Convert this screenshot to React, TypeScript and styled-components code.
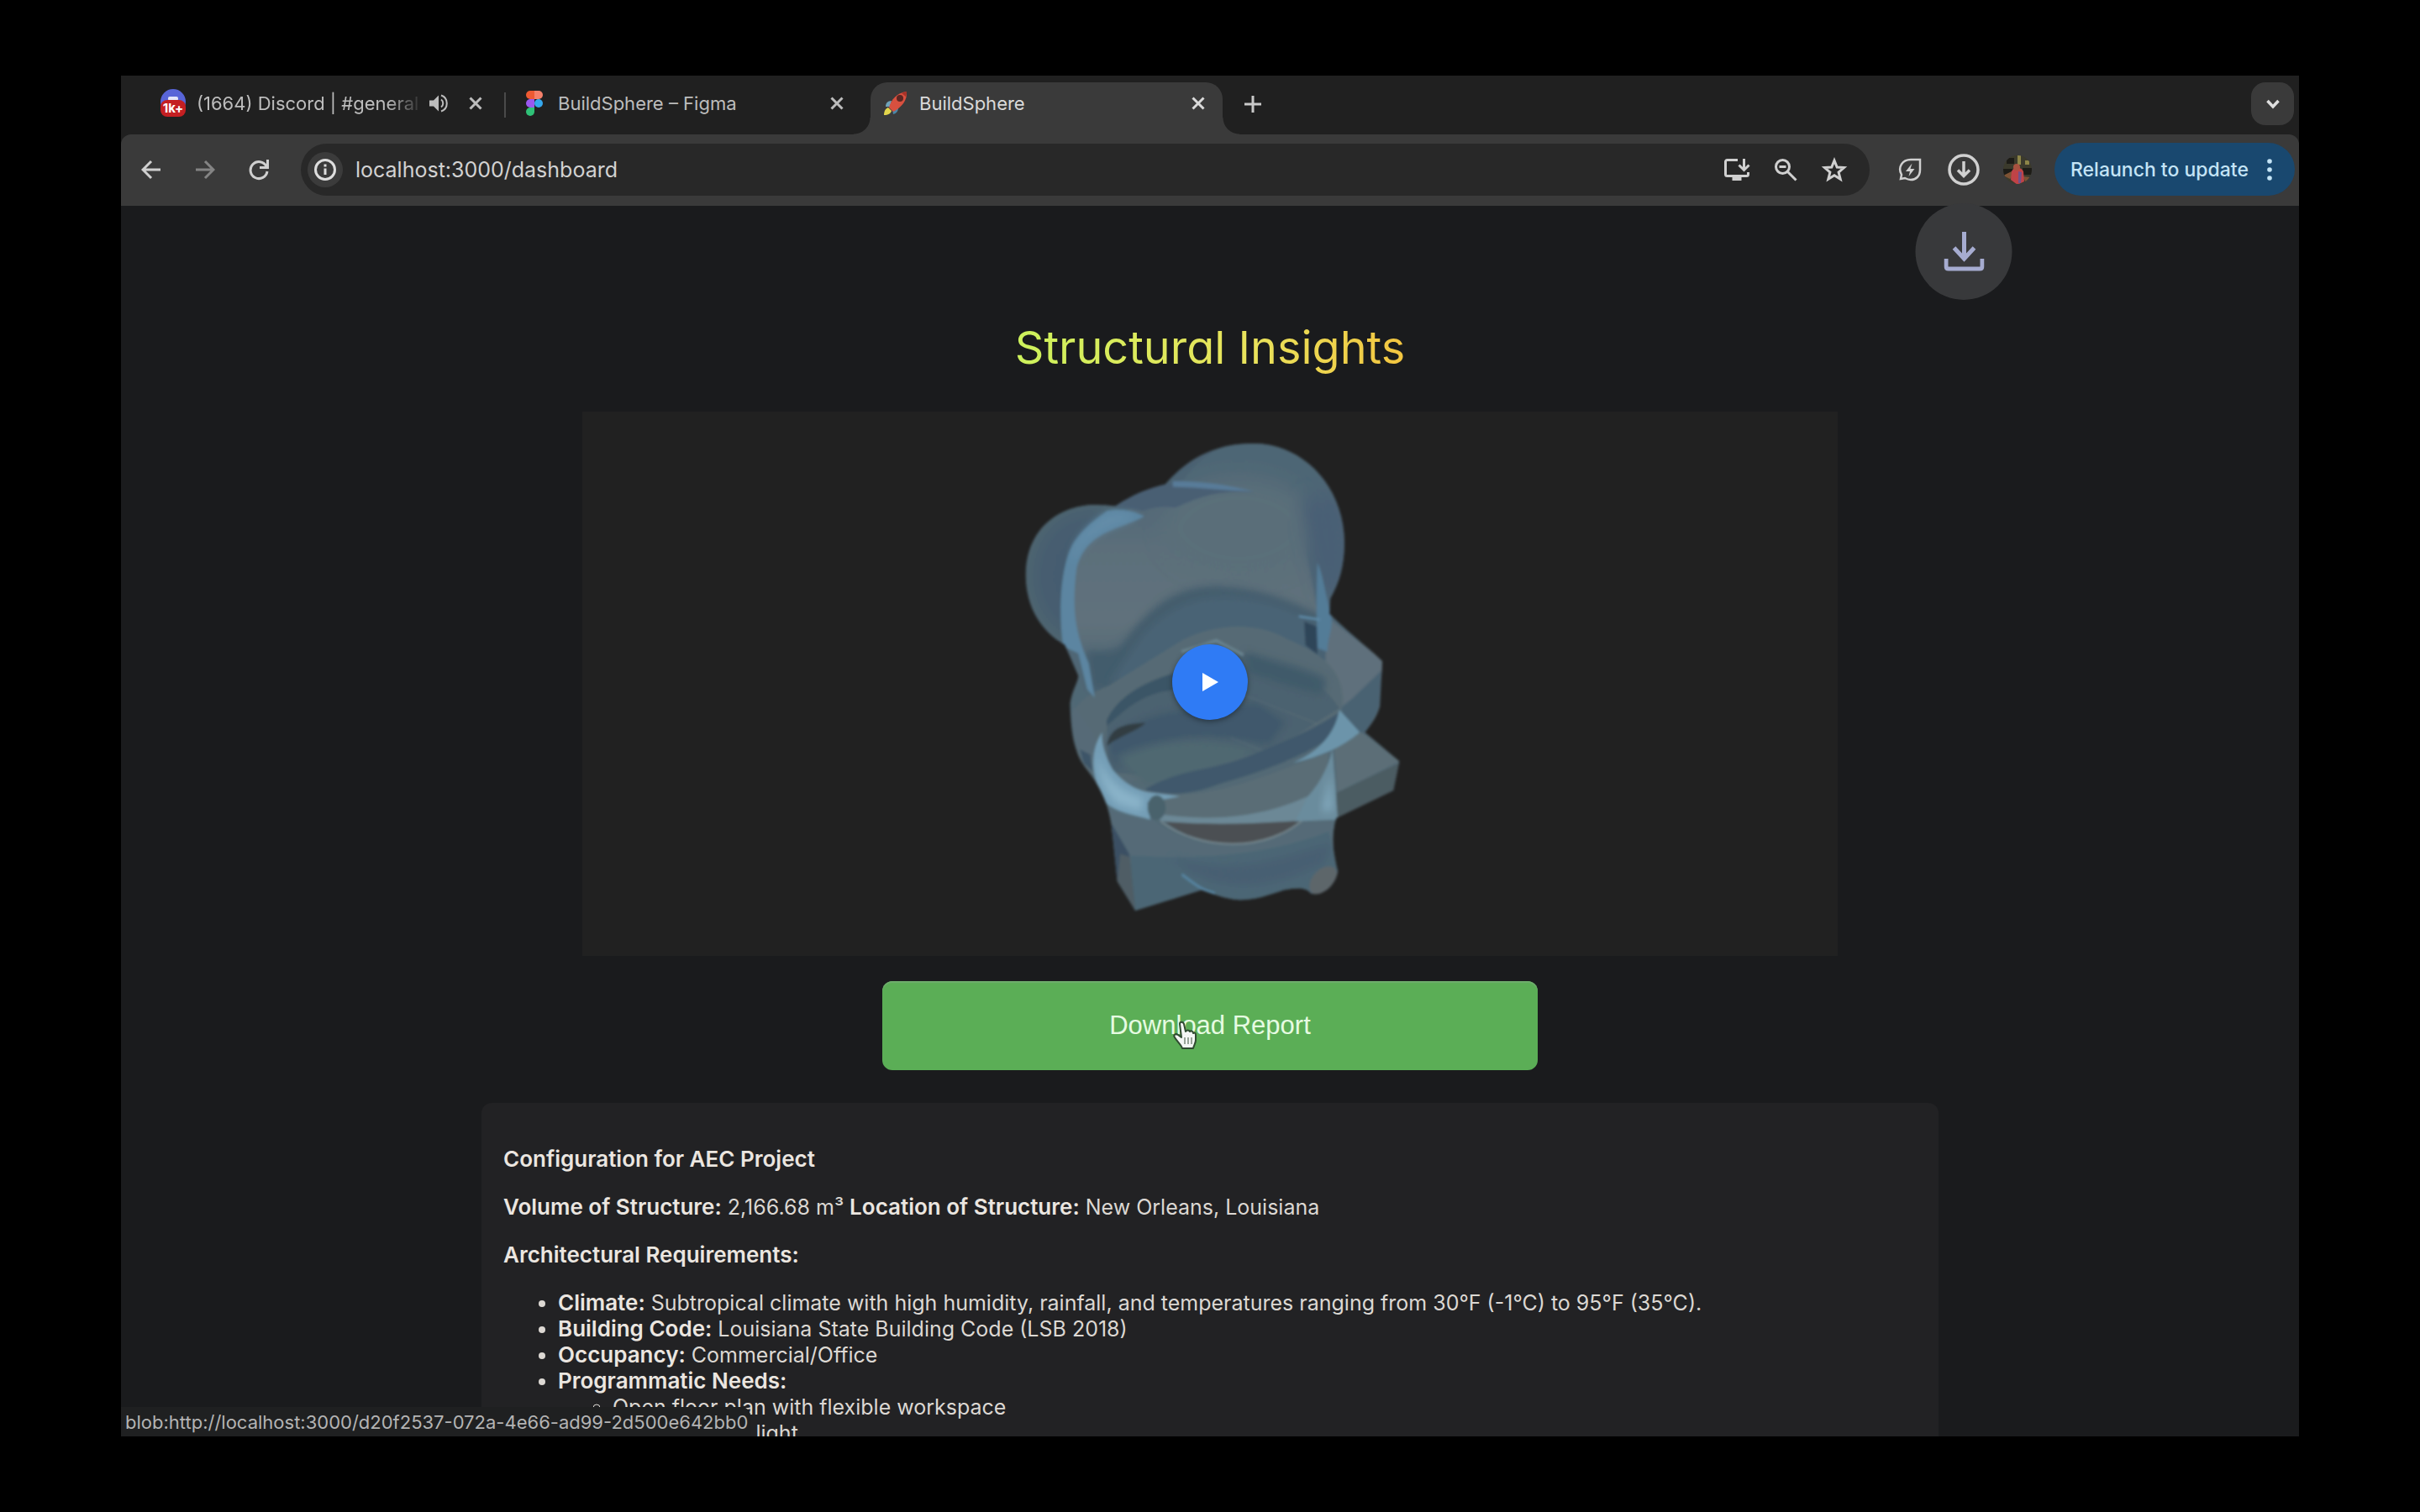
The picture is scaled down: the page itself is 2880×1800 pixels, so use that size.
import React from "react";
import styled, { createGlobalStyle, css } from "styled-components";

const colors = {
  strip: "#202020",
  chrome: "#3a3a3a",
  omnibox: "#282828",
  page: "#1a1b1d",
  card: "#222224",
  icon: "#c9c9c9",
  text: "#dcd8d3",
};

const GlobalStyle = createGlobalStyle`
  * { box-sizing: border-box; }
  body {
    margin: 0;
    background: #000;
    font-family: Inter, "Liberation Sans", sans-serif;
  }
  button { font-family: inherit; border: 0; padding: 0; cursor: pointer; }
`;

const Desktop = styled.div`
  display: flex;
  height: 100vh;
  padding: 5vh 5vw;
  background: #000;
`;

const BrowserWindow = styled.div`
  position: relative;
  flex: 1;
  min-width: 0;
  display: flex;
  flex-direction: column;
  overflow: hidden;
  background: ${colors.strip};
`;

/* ---------- tab strip ---------- */

const TabStrip = styled.div`
  display: flex;
  align-items: flex-end;
  height: 70px;
  padding: 0 6px 0 32px;
`;

const Tab = styled.div<{ $active?: boolean }>`
  position: relative;
  display: flex;
  align-items: center;
  width: ${(p) => (p.$active ? 419 : 424)}px;
  height: 62px;
  padding: 0 ${(p) => (p.$active ? 13 : 18)}px 12px 14px;
  color: ${(p) => (p.$active ? "#dadada" : "#bdbdbd")};
  ${(p) =>
    p.$active &&
    css`
      background: ${colors.chrome};
      border-radius: 20px 20px 0 0;
      &::before,
      &::after {
        content: "";
        position: absolute;
        bottom: 0;
        width: 20px;
        height: 20px;
      }
      &::before {
        left: -20px;
        background: radial-gradient(circle at 0 0, transparent 19px, ${colors.chrome} 20px);
      }
      &::after {
        right: -20px;
        background: radial-gradient(circle at 100% 0, transparent 19px, ${colors.chrome} 20px);
      }
    `}
`;

const TabSeparator = styled.div<{ $visible?: boolean }>`
  width: 2px;
  height: 30px;
  margin: 0 4px 20px 0;
  background: ${(p) => (p.$visible ? "#4a4a4a" : "transparent")};
`;

const Favicon = styled.span`
  display: grid;
  place-items: center;
  width: 32px;
  height: 38px;
  margin-right: 12px;
`;

const TabTitle = styled.span<{ $faded?: boolean }>`
  flex: 1;
  min-width: 0;
  overflow: hidden;
  white-space: nowrap;
  font-size: 22px;
  line-height: 32px;
  ${(p) =>
    p.$faded &&
    css`
      mask-image: linear-gradient(to right, #000 84%, transparent);
    `}
`;

const SmallButton = styled.button`
  display: grid;
  place-items: center;
  width: 32px;
  height: 32px;
  background: none;
  color: inherit;
`;

const SoundButton = styled(SmallButton)`
  margin: 0 12px 0 2px;
`;

const NewTabButton = styled(SmallButton)`
  margin: 0 auto 20px 20px;
  color: ${colors.icon};
`;

const TabSearchButton = styled.button`
  display: grid;
  place-items: center;
  width: 51px;
  height: 51px;
  margin-bottom: 11px;
  border-radius: 17px;
  background: ${colors.chrome};
  color: #dedede;
`;

/* ---------- toolbar ---------- */

const Toolbar = styled.div`
  position: relative;
  z-index: 1;
  display: flex;
  align-items: center;
  height: 85px;
  padding: 0 5px 2px 4px;
  border-radius: 12px 12px 0 0;
  background: ${colors.chrome};
`;

const ToolButton = styled.button<{ $dim?: boolean }>`
  position: relative;
  display: grid;
  place-items: center;
  width: 64px;
  height: 62px;
  background: none;
  color: ${(p) => (p.$dim ? "#848484" : "#d0d0d0")};
`;

const Omnibox = styled.div`
  flex: 1;
  display: flex;
  align-items: center;
  height: 62px;
  margin: 0 16px 0 18px;
  padding: 0 13px 0 8px;
  border-radius: 31px;
  background: ${colors.omnibox};
`;

const SiteInfo = styled.button`
  display: grid;
  place-items: center;
  width: 42px;
  height: 42px;
  margin-right: 15px;
  border-radius: 50%;
  background: #3b3b3b;
  color: #dedede;
`;

const Address = styled.input`
  flex: 1;
  min-width: 0;
  padding: 0;
  border: 0;
  outline: 0;
  background: none;
  color: #d2d2d2;
  font: 25px/36px Inter, "Liberation Sans", sans-serif;
`;

const OmniButton = styled(ToolButton)`
  width: 58px;
`;

const DownloadBurst = styled.span`
  position: absolute;
  top: 71px;
  left: 50%;
  transform: translateX(-50%);
  display: grid;
  place-items: center;
  width: 115px;
  height: 115px;
  border-radius: 50%;
  background: #38393b;
  color: #a6acd0;
`;

const RelaunchButton = styled.button`
  display: flex;
  align-items: center;
  justify-content: space-between;
  width: 286px;
  height: 63px;
  margin-left: 12px;
  padding: 0 27px 0 19px;
  border-radius: 32px;
  background: #19486f;
  color: #c4e4f6;
  font-size: 23px;
  font-weight: 500;
  white-space: nowrap;
`;

/* ---------- page ---------- */

const Page = styled.main`
  flex: 1;
  min-height: 0;
  display: flex;
  flex-direction: column;
  align-items: center;
  overflow: hidden;
  padding-top: 137px;
  background: ${colors.page};
`;

const Title = styled.h1`
  margin: 0 0 44px;
  font-size: 54px;
  line-height: 64px;
  font-weight: 400;
  font-feature-settings: "cv11";
  color: transparent;
  background: linear-gradient(to right, #cdf25c, #e9e35c 60%, #f3c540);
  background-clip: text;
  -webkit-background-clip: text;
`;

const Viewer = styled.section`
  flex: none;
  display: grid;
  place-items: center;
  width: 100%;
  max-width: 1494px;
  height: 648px;
  padding-bottom: 4px;
  background: #212121;
  & > * { grid-area: 1 / 1; }
`;

const Model = styled.svg`
  align-self: start;
  width: 560px;
  height: 640px;
`;

const PlayButton = styled.button`
  display: grid;
  place-items: center;
  width: 90px;
  height: 90px;
  border-radius: 50%;
  background: #2f7bf5;
  box-shadow: 0 2px 6px rgba(0, 0, 0, 0.4);
`;

const DownloadButton = styled.button`
  position: relative;
  flex: none;
  width: 100%;
  max-width: 780px;
  height: 106px;
  margin: 30px 0 39px;
  border-radius: 12px;
  background: #5bae56;
  box-shadow: inset 0 2px 1px #6fae6d;
  color: #e6fbe2;
  font: 31px/36px "Liberation Sans", Arial, sans-serif;
`;

const HandCursor = styled.svg`
  position: absolute;
  left: calc(50% - 44px);
  top: 46px;
`;

const ReportCard = styled.article`
  flex: none;
  width: 100%;
  max-width: 1734px;
  padding: 52px 26px 26px;
  border-radius: 12px;
  background: ${colors.card};
  color: ${colors.text};
  font-size: 25px;
  line-height: 31px;
  p { margin: 0 0 26px; }
  strong { font-size: 26px; line-height: 30px; font-weight: 600; color: #ebe6e0; }
  ul { margin: 0; padding-left: 65px; }
`;

const StatusBubble = styled.div`
  position: absolute;
  left: 0;
  bottom: 0;
  height: 35px;
  padding: 0 3px 0 5px;
  border-top-right-radius: 10px;
  background: #1f2021;
  color: #b4b4b4;
  font-size: 22px;
  line-height: 37px;
  white-space: nowrap;
`;

/* ---------- drawings ---------- */

const stroke = { fill: "none", stroke: "currentColor" } as const;

const CloseIcon = () => (
  <svg width="16" height="16" viewBox="0 0 16 16" {...stroke} strokeWidth="3">
    <path d="M1.5 1.5l13 13M14.5 1.5l-13 13" />
  </svg>
);

const DiscordIcon = () => (
  <svg width="32" height="36" viewBox="0 0 32 36">
    <circle cx="16" cy="16" r="15" fill="#5865d8" />
    <rect x="10" y="10" width="12" height="5" rx="2" fill="#e4e6fa" />
    <rect x="1" y="14" width="30" height="20" rx="8" fill="#c41f22" />
    <text x="16" y="29" textAnchor="middle" fontSize="15" fontWeight="700" fill="#fff">1k+</text>
  </svg>
);

const FigmaIcon = () => (
  <svg width="20" height="30" viewBox="0 0 20 30">
    <path d="M5 0h5v10H5A5 5 0 0 1 5 0z" fill="#ee5a32" />
    <path d="M10 0h5a5 5 0 0 1 0 10h-5z" fill="#f5806a" />
    <path d="M5 10h5v10H5a5 5 0 0 1 0-10z" fill="#9a58f0" />
    <circle cx="15" cy="15" r="5" fill="#35a8ee" />
    <path d="M5 20h5v5a5 5 0 1 1-5-5z" fill="#2fc177" />
  </svg>
);

const RocketIcon = () => (
  <svg width="30" height="30" viewBox="0 0 30 30">
    <path d="M3 19c0-4 2-7 7-7l-2 7z" fill="#6fa3ba" />
    <path d="M18 20c0 4-2 7-6 8l-1-6z" fill="#4b87a8" />
    <path d="M1 29c0-5 2-8 5-9l4 4c-1 3-4 5-9 5z" fill="#e3d64c" />
    <path d="M7 20C9 11 17 2 28 1c1 10-6 19-16 24z" fill="#d8503f" />
    <path d="M22 3c2-1 4-2 6-2 0 2 0 4-1 6z" fill="#a83228" />
    <circle cx="20" cy="9" r="4" fill="#5c2622" />
  </svg>
);

const SpeakerIcon = () => (
  <svg width="24" height="24" viewBox="0 0 24 24" {...stroke} strokeWidth="2">
    <path d="M1 8.500h5l6-6v19l-6-6H1z" fill="currentColor" stroke="none" />
    <path d="M15 7.500c3 2 3 7 0 9M15 2.500c9 3 9 16 0 19" />
  </svg>
);

const PlusIcon = () => (
  <svg width="20" height="20" viewBox="0 0 20 20" {...stroke} strokeWidth="3">
    <path d="M10 0v20M0 10h20" />
  </svg>
);

const ChevronIcon = () => (
  <svg width="16" height="12" viewBox="0 0 16 12" {...stroke} strokeWidth="3.500">
    <path d="M1.500 2L8 9l6.500-7" />
  </svg>
);

const ArrowIcon = ({ forward }: { forward?: boolean }) => (
  <svg width="24" height="24" viewBox="0 0 24 24" {...stroke} strokeWidth="3">
    <path d={forward ? "M1 12h20M12 2l10 10-10 10" : "M23 12H3M12 2L2 12l10 10"} />
  </svg>
);

const ReloadIcon = () => (
  <svg width="26" height="26" viewBox="0 0 26 26" {...stroke} strokeWidth="3">
    <path d="M22 9A10 10 0 1 0 23 15" />
    <path d="M23.500 1v9.500H14" />
  </svg>
);

const InfoIcon = () => (
  <svg width="28" height="28" viewBox="0 0 28 28" {...stroke} strokeWidth="3">
    <circle cx="14" cy="14" r="11.500" />
    <path d="M14 12.500v7.500M14 7.500v3" />
  </svg>
);

const InstallIcon = () => (
  <svg width="32" height="28" viewBox="0 0 32 28" {...stroke} strokeWidth="3">
    <path d="M17 2.500H4.500a2 2 0 0 0-2 2v15a2 2 0 0 0 2 2h23a2 2 0 0 0 2-2V17" />
    <path d="M10.500 22h11v5h-11z" fill="currentColor" stroke="none" />
    <path d="M24.500 1v12M18.500 8.500l6 6 6-6" />
  </svg>
);

const ZoomIcon = () => (
  <svg width="28" height="28" viewBox="0 0 28 28" {...stroke} strokeWidth="3">
    <circle cx="10.500" cy="10.500" r="8" />
    <path d="M16.500 16.500l10 10M6.500 10.500h8" />
  </svg>
);

const StarIcon = () => (
  <svg width="32" height="32" viewBox="0 0 32 32" {...stroke} strokeWidth="3">
    <path d="M16 5l3.200 8 8.300.600-6.400 5.400 2.100 8.200L16 22.700l-7.200 4.500 2.100-8.200-6.400-5.400 8.300-.600z" />
  </svg>
);

const LeafIcon = () => (
  <svg width="30" height="30" viewBox="0 0 30 30" {...stroke} strokeWidth="2.500">
    <path d="M27 3v12c0 8-5 12-11 12-3 0-5-1-7-2l-5 1 1-5C0 12 6 3 16 3z" />
    <path d="M17.500 7.500L10 17h5l-1.500 6 7-9h-5z" fill="currentColor" stroke="none" />
  </svg>
);

const DownloadCircleIcon = () => (
  <svg width="38" height="38" viewBox="0 0 38 38" {...stroke} strokeWidth="3.500">
    <circle cx="19" cy="19" r="17" />
    <path d="M19 9v17M12 19.500l7 7 7-7" />
  </svg>
);

const TrayIcon = () => (
  <svg width="48" height="48" viewBox="0 0 48 48" {...stroke} strokeWidth="5">
    <path d="M24 1v33M12 20l12 13 12-13M2.500 33v9q0 3 3 3h37q3 0 3-3v-9" />
  </svg>
);

const AvatarIcon = () => (
  <svg width="36" height="36" viewBox="0 0 36 36">
    <clipPath id="avatar-clip"><circle cx="18" cy="18" r="17" /></clipPath>
    <g clipPath="url(#avatar-clip)">
      <rect width="36" height="36" fill="#3b3a2c" />
      <path d="M0 17h12v9H0zM24 16h12v8H24zM5 4h9v7H5z" fill="#1d1c17" />
      <path d="M18 0h4v12h-4zM27 7h5v5h-5z" fill="#8d8548" />
      <path d="M1 25l10-5 4 3-6 6zM24 26l9 1-5 6z" fill="#7d5234" />
      <path d="M11 20c2-5 11-6 14 0l1 12-8 4-8-6z" fill="#c04347" />
      <path d="M19 20l4 1-1 13h-3z" fill="#74508a" />
      <circle cx="17" cy="15" r="4" fill="#a8523f" />
    </g>
  </svg>
);

const DotsIcon = () => (
  <svg width="6" height="28" viewBox="0 0 6 28" fill="currentColor">
    <circle cx="3" cy="4" r="2.800" />
    <circle cx="3" cy="14" r="2.800" />
    <circle cx="3" cy="24" r="2.800" />
  </svg>
);

const StructureModel = () => (
  <Model viewBox="0 0 1568 1568" preserveAspectRatio="none" role="img" aria-label="Rendered structure">
    <defs>
      <linearGradient id="shell" x1="0" y1="0" x2="0" y2="1">
        <stop offset="0" stopColor="#4a6070" />
        <stop offset="0.3" stopColor="#4c6474" />
        <stop offset="0.7" stopColor="#536974" />
        <stop offset="1" stopColor="#4c6776" />
      </linearGradient>
      <linearGradient id="back" x1="0" y1="0" x2="0" y2="1">
        <stop offset="0" stopColor="#4f6675" />
        <stop offset="0.3" stopColor="#5b6e7a" />
        <stop offset="0.65" stopColor="#60717b" />
        <stop offset="1" stopColor="#4a6372" />
      </linearGradient>
      <radialGradient id="lobe" cx="0.5" cy="0.5" r="0.5">
        <stop offset="0" stopColor="#435a6e" />
        <stop offset="0.75" stopColor="#465d6f" />
        <stop offset="1" stopColor="#4e6570" />
      </radialGradient>
      <filter id="soft" x="-5%" y="-5%" width="110%" height="110%">
        <feGaussianBlur stdDeviation="4" />
      </filter>
      <filter id="softer" x="-20%" y="-30%" width="140%" height="160%">
        <feGaussianBlur stdDeviation="12" />
      </filter>
      <filter id="haze" x="-30%" y="-40%" width="160%" height="180%">
        <feGaussianBlur stdDeviation="28" />
      </filter>
      <clipPath id="outline">
        <path d="M170 480C168 350 270 278 390 272c30 0 60 3 80 3 70-40 120-53 165-63C720 125 820 92 930 93c160 0 300 122 302 287 0 70-17 120-47 165l-3 45c58 50 118 90 176 138l-8 132c-10 30-30 55-50 75l115 85-20 85-190 80c-20 55-10 105 5 155-10 50-60 75-90 65-20-20-50-15-90-10-50 15-100 30-150 29-50-4-90-19-125-29l-220 60-60-85-20-170c-15-80-55-125-80-155-40-45-55-95-57-195 7-40 27-60 27-80-15-30-35-70-45-90-80-40-128-110-130-200z" />
      </clipPath>
    </defs>
    <g filter="url(#soft)">
      <g clipPath="url(#outline)">
        <rect width="1568" height="1568" fill="url(#shell)" />
        {/* lobes */}
        <circle cx="385" cy="478" r="214" fill="url(#lobe)" />
        <circle cx="930" cy="385" r="300" fill="#4e6675" />
        {/* backrest */}
        <path d="M400 820C330 640 290 500 350 400 400 330 520 290 640 215c180-10 330 10 420 30 30 120 60 210 80 330l30 250-400-80z" fill="url(#back)" />
        <ellipse cx="880" cy="340" rx="260" ry="150" fill="#5a6e79" filter="url(#haze)" />
        <path d="M1090 250c10 130 50 210 75 300l30 0 50-120-30-180z" fill="#495f74" filter="url(#haze)" />
        <path d="M470 275c60-40 120-55 170-62 90-15 180 0 290 22-120-5-170 10-260 45-50-5-80 0-110 10z" fill="#495f73" />
        <path d="M660 203c90 0 180 10 270 30-90-3-180-12-270-14z" fill="#587c99" />
        {/* arch behind the seat */}
        <path d="M370 700c30-10 80 10 120-20 90-110 180-175 330-170 140 5 250 50 340 90v230l-770-20z" fill="#425b6c" filter="url(#softer)" />
        <path d="M560 650c80-75 160-110 270-110 130 0 250 40 330 90v160L450 790z" fill="#4a6475" filter="url(#softer)" />
        {/* right-hand slabs */}
        <path d="M1175 600l190 128-10 50-195 120z" fill="#5f707b" />
        <path d="M1225 865l130-110-8 105-48 85-70 20z" fill="#4a6272" />
        <path d="M1195 950l95-15 125 85-205 90z" fill="#5c6e77" />
        <path d="M1205 1112l210-87-20 80-190 85z" fill="#4c5b62" />
        <path d="M1098 612l44 16v80l-40-26z" fill="#2f4559" />
        {/* seat ring */}
        <path d="M325 880c40-50 60-55 130-85l240-130c120-50 250-50 350 0 110 40 190 90 180 190-30 120-800 330-880 160z" fill="#566a74" />
        <path d="M440 905c30-60 90-110 210-140 100-70 200-80 310-40 110 40 200 60 255 140l-190 105-380 100-200-20z" fill="#4c626f" />
        <path d="M440 900c30-60 110-105 230-138l-10 50c-100 10-150 50-220 105z" fill="#3a5466" />
        <path d="M900 700c110 30 210 50 270 80l-10 45c-90-10-170-45-250-60z" fill="#405a6b" filter="url(#softer)" />
        <path d="M440 960c100-70 190-90 300-95l200-20 100 60-60 70c-160-30-300-40-410 25-50 20-90 40-110 30z" fill="#40596c" filter="url(#softer)" />
        <path d="M470 1010c130-60 320-60 480-20l-200 70-180 30z" fill="#4f6871" filter="url(#softer)" />
        <path d="M850 810l290 100M850 950l200 70" fill="none" stroke="#64757d" strokeWidth="3" opacity="0.5" />
        <path d="M440 975c10-45 40-65 130-67-30 25-80 35-130 67z" fill="#323c43" />
        <path d="M570 1100c120-60 210-50 340-95 120-40 220-80 300-125l10 50c-90 60-220 110-400 155-90 30-170 40-250 20z" fill="#3f586c" />
        {/* seat front */}
        <path d="M570 1105c200 40 380-40 610-110l-15 100c-70 80-160 90-300 100-100 5-200 0-270-20z" fill="#5a6d76" />
        <path d="M405 1060l180 125c140 110 400 100 520-10l90-20 10 200-400 80-290-20z" fill="#546b77" />
        <path d="M520 1295c280 15 480-10 660-70l30 120-90 65c-130-10-170 20-240 16-50-2-80-20-125-30l-230 65z" fill="#4c6674" />
        <path d="M650 1300c220 60 370 0 540-40l-30 60c-200 80-350 90-510-20z" fill="#465f72" filter="url(#softer)" />
        <path d="M455 1200l60 90 20 165-60-85z" fill="#3a5064" />
        <path d="M485 1290l32 10 18 155-60-85z" fill="#4f5d65" />
        <ellipse cx="1162" cy="1368" rx="52" ry="34" fill="#5d666b" transform="rotate(-38 1162 1368)" />
        <path d="M330 860c-15 80 20 160 65 190l20-60c-10-50-50-90-85-130z" fill="#566b77" />
        <path d="M350 985l35 15 8 50-30-25z" fill="#3c5568" />
        {/* opening under the rim */}
        <path d="M635 1197c150 6 300 3 450-5-90 90-330 90-450 5z" fill="#4c5053" />
        <path d="M620 1195c130 90 360 90 480-10" fill="none" stroke="#74858c" strokeWidth="5" />
        {/* edge highlights */}
        <path d="M440 290c40-10 90 0 125 15-80 40-190 40-225 150-20 130 0 200 40 280l20 100-25-25-30-105-50-20C275 570 290 420 340 370c40-45 80-65 100-80z" fill="#5b85a1" />
        <path d="M435 300c30-10 70-5 105 5-80 40-170 40-215 140-10-60 60-120 110-145z" fill="#648ca8" filter="url(#softer)" />
        <path d="M1142 440c20 40 25 90 45 150 10 40-10 60-12 110l-32-10c-5-70-5-160-1-250z" fill="#537b97" />
        <path d="M1080 597l70 10" stroke="#5f8ba8" strokeWidth="6" />
        <path d="M425 935c-5 30 10 70 35 110 40 40 70 55 115 65l110 12-110 18 10 50c-60-15-110-20-150-50-40-60-60-140-10-205z" fill="#739db5" />
        <path d="M410 1000c20 70 80 110 150 125l-5 40-80-20c-45-40-65-90-65-145z" fill="#8ab3c9" filter="url(#softer)" />
        <path d="M1192 985c-15 60-50 110-95 150l-30 60 143-5z" fill="#6b8c9d" />
        <path d="M1185 1060l-30 105h40z" fill="#7fa6b9" filter="url(#softer)" />
        <path d="M600 1172c170 25 350 15 510-50l-40 72c-160 10-330 12-450 0z" fill="#6c8896" />
        <path d="M1060 1025c80-30 140-80 155-155l68 65c-60 45-130 70-223 90z" fill="#6c94aa" />
        <path d="M690 1350c60 40 70 45 110 55" fill="none" stroke="#5685a2" strokeWidth="7" />
        <path d="M690 700l115-32 90 42" fill="none" stroke="#6a8592" strokeWidth="9" />
        <ellipse cx="606" cy="1155" rx="30" ry="36" fill="#4a626c" />
      </g>
    </g>
  </Model>
);

const PlayIcon = () => (
  <svg width="20" height="24" viewBox="0 0 20 24" fill="#fff">
    <path d="M1 1l19 11L1 23z" />
  </svg>
);

export default function App() {
  return (
    <Desktop>
      <GlobalStyle />
      <BrowserWindow>
        <TabStrip>
          <Tab>
            <Favicon><DiscordIcon /></Favicon>
            <TabTitle $faded>(1664) Discord | #general</TabTitle>
            <SoundButton aria-label="Mute tab"><SpeakerIcon /></SoundButton>
            <SmallButton aria-label="Close tab"><CloseIcon /></SmallButton>
          </Tab>
          <TabSeparator $visible />
          <Tab>
            <Favicon><FigmaIcon /></Favicon>
            <TabTitle>BuildSphere – Figma</TabTitle>
            <SmallButton aria-label="Close tab"><CloseIcon /></SmallButton>
          </Tab>
          <TabSeparator />
          <Tab $active>
            <Favicon><RocketIcon /></Favicon>
            <TabTitle>BuildSphere</TabTitle>
            <SmallButton aria-label="Close tab"><CloseIcon /></SmallButton>
          </Tab>
          <NewTabButton aria-label="New tab"><PlusIcon /></NewTabButton>
          <TabSearchButton aria-label="Search tabs"><ChevronIcon /></TabSearchButton>
        </TabStrip>

        <Toolbar>
          <ToolButton aria-label="Back"><ArrowIcon /></ToolButton>
          <ToolButton $dim aria-label="Forward"><ArrowIcon forward /></ToolButton>
          <ToolButton aria-label="Reload"><ReloadIcon /></ToolButton>
          <Omnibox>
            <SiteInfo aria-label="Site information"><InfoIcon /></SiteInfo>
            <Address aria-label="Address" defaultValue="localhost:3000/dashboard" />
            <OmniButton aria-label="Install app"><InstallIcon /></OmniButton>
            <OmniButton aria-label="Zoom"><ZoomIcon /></OmniButton>
            <OmniButton aria-label="Bookmark"><StarIcon /></OmniButton>
          </Omnibox>
          <ToolButton aria-label="Energy saver"><LeafIcon /></ToolButton>
          <ToolButton aria-label="Downloads">
            <DownloadCircleIcon />
            <DownloadBurst><TrayIcon /></DownloadBurst>
          </ToolButton>
          <ToolButton aria-label="Profile"><AvatarIcon /></ToolButton>
          <RelaunchButton>
            Relaunch to update
            <DotsIcon />
          </RelaunchButton>
        </Toolbar>

        <Page>
          <Title>Structural Insights</Title>
          <Viewer>
            <StructureModel />
            <PlayButton aria-label="Play"><PlayIcon /></PlayButton>
          </Viewer>
          <DownloadButton>
            Download Report
            <HandCursor width="28" height="36" viewBox="0 0 28 36">
              <path
                d="M8 5c0-3 4-3 5 0l2 9c1-2 4-2 5 0 1-1 4-1 4 2 2-1 3 0 3 2v6c0 4-2 6-3 10H11C10 30 5 26 2 21c-2-3 1-5 4-3l4 3z"
                fill="#f4f6f4" stroke="#2f4a30" strokeWidth="2" strokeLinejoin="round"
              />
              <path d="M14 21v8M18 21v8M22 21v8" stroke="#7b8a7b" strokeWidth="1.500" />
            </HandCursor>
          </DownloadButton>
          <ReportCard>
            <p><strong>Configuration for AEC Project</strong></p>
            <p>
              <strong>Volume of Structure:</strong> 2,166.68 m³ <strong>Location of Structure:</strong> New Orleans, Louisiana
            </p>
            <p><strong>Architectural Requirements:</strong></p>
            <ul>
              <li>
                <strong>Climate:</strong> Subtropical climate with high humidity, rainfall, and temperatures ranging from 30°F (-1°C) to 95°F (35°C).
              </li>
              <li><strong>Building Code:</strong> Louisiana State Building Code (LSB 2018)</li>
              <li><strong>Occupancy:</strong> Commercial/Office</li>
              <li>
                <strong>Programmatic Needs:</strong>
                <ul>
                  <li>Open floor plan with flexible workspace</li>
                  <li>Ample natural light</li>
                </ul>
              </li>
            </ul>
          </ReportCard>
        </Page>
        <StatusBubble>blob:http://localhost:3000/d20f2537-072a-4e66-ad99-2d500e642bb0</StatusBubble>
      </BrowserWindow>
    </Desktop>
  );
}
